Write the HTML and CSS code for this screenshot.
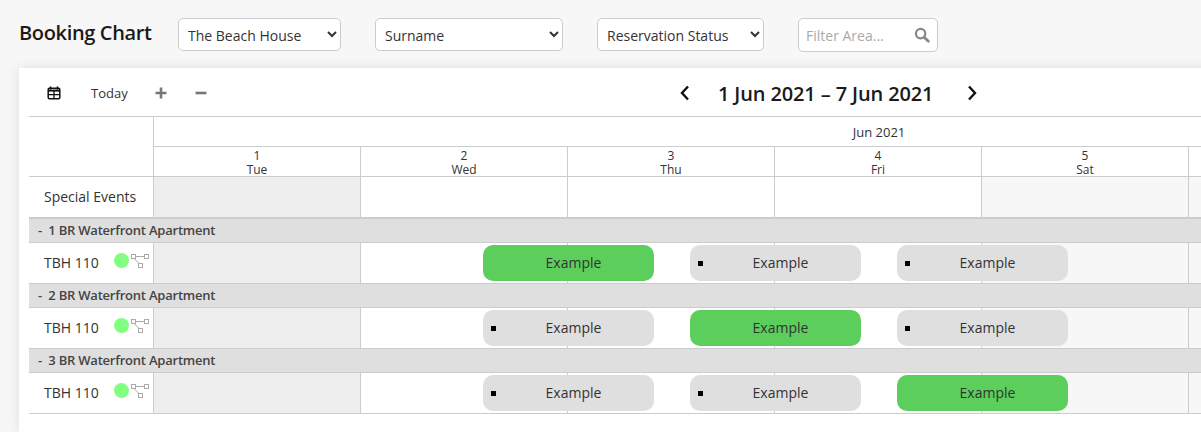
FILE: index.html
```html
<!DOCTYPE html>
<html lang="en">
<head>
<meta charset="utf-8">
<title>Booking Chart</title>
<link rel="stylesheet" href="styles.css">
</head>
<body>
<header class="top">
  <h1 class="title">Booking Chart</h1>
  <select class="sel sel-prop"><option>The Beach House</option></select>
  <select class="sel sel-name"><option>Surname</option></select>
  <select class="sel sel-status"><option>Reservation Status</option></select>
  <div class="filter">
    <input class="filter-input" type="text" placeholder="Filter Area...">
    <svg class="filter-icon" width="16" height="16" viewBox="0 0 16 16"><circle cx="6.6" cy="6.6" r="4.7" fill="none" stroke="#888" stroke-width="2.2"/><path d="M10.2 10.2 14.3 14.3" stroke="#888" stroke-width="2.8" stroke-linecap="round"/></svg>
  </div>
</header>
<main class="card">
  <div class="toolbar">
    <svg class="cal" width="14" height="14" viewBox="0 0 14 14"><path d="M3.5 0.5v3M10.5 0.5v3" stroke="#111" stroke-width="1.6"/><rect x="1.2" y="2.2" width="11.6" height="10.6" rx="1.2" fill="none" stroke="#111" stroke-width="1.5"/><path d="M1.2 4.6h11.6" stroke="#111" stroke-width="2"/><path d="M1.2 8.6h11.6M7 4.6v8" stroke="#111" stroke-width="1.3"/></svg>
    <span class="today">Today</span>
    <svg class="zoom-plus" width="12" height="12" viewBox="0 0 12 12"><path d="M6 .5v11M.5 6h11" stroke="#777" stroke-width="2.6"/></svg>
    <svg class="zoom-minus" width="12" height="12" viewBox="0 0 12 12"><path d="M.5 6h11" stroke="#777" stroke-width="2.6"/></svg>
    <svg class="prev" width="10" height="16" viewBox="0 0 10 16"><path d="M8 1.5 2 8l6 6.5" fill="none" stroke="#111" stroke-width="2.4"/></svg>
    <span class="range">1 Jun 2021 – 7 Jun 2021</span>
    <svg class="next" width="10" height="16" viewBox="0 0 10 16"><path d="M2 1.5 8 8l-6 6.5" fill="none" stroke="#111" stroke-width="2.4"/></svg>
  </div>
  <div class="chart">
    <div class="head">
      <div class="corner"></div>
      <div class="head-right">
        <div class="month">Jun 2021</div>
        <div class="days">
          <div class="day">1<br>Tue</div>
          <div class="day">2<br>Wed</div>
          <div class="day">3<br>Thu</div>
          <div class="day">4<br>Fri</div>
          <div class="day">5<br>Sat</div>
          <div class="day">6<br>Sun</div>
          <div class="day">7<br>Mon</div>
        </div>
      </div>
    </div>
    <div class="row events">
      <div class="label">Special Events</div>
      <div class="cell past"></div><div class="cell"></div><div class="cell"></div><div class="cell"></div><div class="cell wknd"></div><div class="cell wknd"></div><div class="cell"></div>
    </div>
    <div class="group">-&nbsp; 1 BR Waterfront Apartment</div>
    <div class="row room">
      <div class="label"><span class="room-name">TBH 110</span><span class="dot"></span>
        <svg class="tree" width="18" height="14" viewBox="0 0 18 14"><path d="M4 2.500h9M3.500 5 8 9.500" stroke="#aaa" stroke-width="1"/><rect x=".5" y=".5" width="4" height="4" fill="#fff" stroke="#aaa"/><rect x="13.500" y=".5" width="4" height="4" fill="#fff" stroke="#aaa"/><rect x="7.500" y="9.500" width="4" height="4" fill="#fff" stroke="#aaa"/></svg></div>
      <div class="cell past"></div><div class="cell"></div><div class="cell"></div><div class="cell"></div><div class="cell wknd"></div><div class="cell wknd"></div><div class="cell"></div>
      <div class="booking green at-2">Example</div>
      <div class="booking at-3"><i class="mark"></i>Example</div>
      <div class="booking at-4"><i class="mark"></i>Example</div>
    </div>
    <div class="group">-&nbsp; 2 BR Waterfront Apartment</div>
    <div class="row room">
      <div class="label"><span class="room-name">TBH 110</span><span class="dot"></span>
        <svg class="tree" width="18" height="14" viewBox="0 0 18 14"><path d="M4 2.500h9M3.500 5 8 9.500" stroke="#aaa" stroke-width="1"/><rect x=".5" y=".5" width="4" height="4" fill="#fff" stroke="#aaa"/><rect x="13.500" y=".5" width="4" height="4" fill="#fff" stroke="#aaa"/><rect x="7.500" y="9.500" width="4" height="4" fill="#fff" stroke="#aaa"/></svg></div>
      <div class="cell past"></div><div class="cell"></div><div class="cell"></div><div class="cell"></div><div class="cell wknd"></div><div class="cell wknd"></div><div class="cell"></div>
      <div class="booking at-2"><i class="mark"></i>Example</div>
      <div class="booking green at-3">Example</div>
      <div class="booking at-4"><i class="mark"></i>Example</div>
    </div>
    <div class="group">-&nbsp; 3 BR Waterfront Apartment</div>
    <div class="row room">
      <div class="label"><span class="room-name">TBH 110</span><span class="dot"></span>
        <svg class="tree" width="18" height="14" viewBox="0 0 18 14"><path d="M4 2.500h9M3.500 5 8 9.500" stroke="#aaa" stroke-width="1"/><rect x=".5" y=".5" width="4" height="4" fill="#fff" stroke="#aaa"/><rect x="13.500" y=".5" width="4" height="4" fill="#fff" stroke="#aaa"/><rect x="7.500" y="9.500" width="4" height="4" fill="#fff" stroke="#aaa"/></svg></div>
      <div class="cell past"></div><div class="cell"></div><div class="cell"></div><div class="cell"></div><div class="cell wknd"></div><div class="cell wknd"></div><div class="cell"></div>
      <div class="booking at-2"><i class="mark"></i>Example</div>
      <div class="booking at-3"><i class="mark"></i>Example</div>
      <div class="booking green at-4">Example</div>
    </div>
  </div>
</main>
</body>
</html>
```
FILE: styles.css
```css
* { box-sizing: border-box; }
html, body { margin: 0; height: 432px; overflow: hidden; }
body { background: #f7f7f7; font-family: "Open Sans", sans-serif; color: #333; }

.top { display: flex; align-items: flex-start; height: 68px; padding: 18px 0 0 19px; }
.title { margin: 0 26px 0 0; width: 133px; font-size: 20px; line-height: 30px; font-weight: 600; letter-spacing: -0.35px; color: #1a1a1a; white-space: nowrap; }
.sel { height: 33px; padding: 2px 5px 0; border: 1px solid #ccc; border-radius: 5px; background: #fff; font-family: inherit; font-size: 14px; color: #333; }
.sel-prop { width: 163px; margin-right: 34px; }
.sel-name { width: 188px; margin-right: 34px; }
.sel-status { width: 167px; margin-right: 34px; }
.filter { display: flex; align-items: center; width: 140px; height: 34px; border: 1px solid #ccc; border-radius: 5px; background: #fff; padding: 0 7px; }
.filter-input { flex: 1; min-width: 0; border: 0; padding: 0; outline: 0; background: transparent; font-family: inherit; font-size: 14px; }
.filter-input::placeholder { color: #aaa; }
.filter-icon { flex: none; }

.card { margin-left: 19px; width: 1800px; height: 364px; padding-left: 10px; background: #fff; box-shadow: 0 0 12px rgba(0,0,0,.1); }
.toolbar { display: flex; align-items: center; height: 48px; padding: 2px 0 0 18px; }
.cal { margin-right: 30px; }
.today { font-size: 13px; color: #333; width: 37px; margin-right: 27px; white-space: nowrap; }
.zoom-plus { margin-right: 28px; }
.zoom-minus { margin-right: 473px; }
.prev { margin-right: 28px; }
.range { font-size: 20px; font-weight: 600; letter-spacing: -0.13px; color: #1a1a1a; width: 214px; margin-right: 35px; white-space: nowrap; }

.chart { width: 1574px; border-top: 1px solid #ccc; font-size: 14px; }
.head { display: flex; height: 60px; border-bottom: 1px solid #ccc; }
.corner { flex: none; width: 125px; border-right: 1px solid #ccc; }
.head-right { width: 1449px; }
.month { height: 30px; padding-left: 1px; border-bottom: 1px solid #ccc; text-align: center; font-size: 13px; line-height: 31px; }
.days { display: flex; height: 29px; }
.day { flex: none; width: 207px; border-right: 1px solid #ccc; text-align: center; font-size: 12px; line-height: 14px; padding-top: 2px; }

.row { position: relative; display: flex; border-bottom: 1px solid #ccc; }
.events { height: 42px; border-bottom-width: 2px; }
.events .label { padding-bottom: 2px; }
.room { height: 41px; }
.room .label { padding-bottom: 2px; }
.label { flex: none; display: flex; align-items: center; width: 125px; padding-left: 15px; border-right: 1px solid #ccc; font-size: 14px; color: #333; }
.cell { flex: none; width: 207px; border-right: 1px solid #ccc; }
.past { background: #eee; }
.wknd { background: #f7f7f7; }
.group { height: 24px; padding-left: 9px; background: #dfdfdf; border-bottom: 1px solid #ccc; font-size: 13px; font-weight: 600; letter-spacing: -0.22px; line-height: 23px; color: #444; white-space: nowrap; }
.room-name { width: 70px; white-space: nowrap; }
.dot { width: 15px; height: 15px; border-radius: 50%; background: #80ff80; margin: -4px 2px 0 0; flex: none; }
.tree { margin-top: -3px; flex: none; }

.booking { position: absolute; top: 2px; width: 171px; height: 36px; padding-left: 10px; border-radius: 10px; background: #dfdfdf; font-size: 14px; line-height: 36px; text-align: center; color: #333; }
.green { background: #5bce5c; }
.at-2 { left: 454px; }
.at-3 { left: 661px; }
.at-4 { left: 868px; }
.mark { position: absolute; left: 8px; top: 16px; width: 5px; height: 5px; background: #000; }
```
